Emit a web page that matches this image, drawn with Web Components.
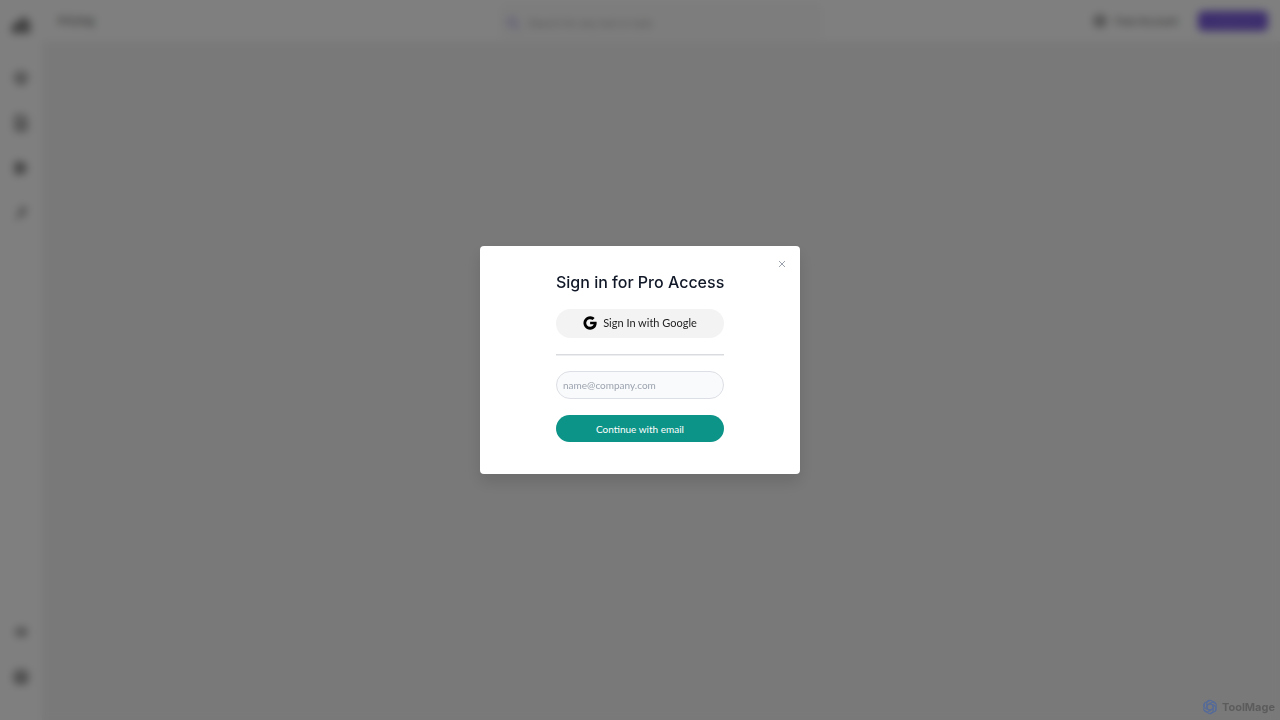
<!DOCTYPE html>
<html lang="en">
<head>
<meta charset="utf-8">
<meta name="viewport" content="width=device-width, initial-scale=1">
<title>Pricing - ToolMage</title>
<style>
  body { margin: 0; font-family: Inter, "Liberation Sans", sans-serif; }
</style>
</head>
<body>
<app-shell>
  <side-bar slot="side"></side-bar>
  <top-bar slot="top" heading="Pricing"></top-bar>
</app-shell>
<modal-overlay>
  <sign-in-card heading="Sign in for Pro Access"></sign-in-card>
</modal-overlay>
<brand-mark>ToolMage</brand-mark>

<script>
  // page frame: narrow menu on the left, bar on top
  class AppShell extends HTMLElement {
    constructor() {
      super();
      this.attachShadow({mode: 'open'}).innerHTML = `<style>
  :host { display: grid; grid-template-columns: 42px 1fr; min-height: 100vh; background: #f3f3f3; }
  .main { min-width: 0; }
</style>
<slot name="side"></slot>
<div class="main">
  <slot name="top"></slot>
  <main><slot></slot></main>
</div>
`;
    }
  }
  customElements.define('app-shell', AppShell);

  class SideBar extends HTMLElement {
    constructor() {
      super();
      this.attachShadow({mode: 'open'}).innerHTML = `<style>
  :host { display: flex; flex-direction: column; align-items: center; justify-content: space-between; box-sizing: border-box; padding: 16px 0 35px; background: #fff; color: #666; }
  nav { display: flex; flex-direction: column; align-items: center; gap: 29px; }
  a { color: inherit; height: 16px; }
  a.home { height: 18px; margin-bottom: 7px; }
  svg { display: block; fill: none; stroke: currentColor; stroke-width: 2; }
  .solid { fill: #999; }
</style>
<nav aria-label="Main">
  <a class="home" href="#" aria-label="Home"><svg width="20" height="18" viewBox="0 0 20 18"><path class="solid" d="M2 16V10l4-3 3 3V5l4-3 5 5v9h-5v-5h-3v5z"/></svg></a>
  <a href="#" aria-label="Tools"><svg width="16" height="16" viewBox="0 0 16 16"><path d="M8 2l6 4-6 4-6-4zM2 10l6 4 6-4"/></svg></a>
  <a href="#" aria-label="Saved"><svg width="16" height="16" viewBox="0 0 16 16"><path d="M3 1h7l3 3v11H3zM5 7h6M5 11h6"/></svg></a>
  <a href="#" aria-label="Categories"><svg width="16" height="16" viewBox="0 0 16 16"><path class="solid" d="M3 3h6l4 5-4 5H3z"/></svg></a>
  <a href="#" aria-label="Trending"><svg width="16" height="16" viewBox="0 0 16 16"><path d="M4 14l3-5h3l2-7M6 4h5v6"/></svg></a>
</nav>
<nav aria-label="Account">
  <a href="#" aria-label="Help"><svg width="16" height="16" viewBox="0 0 16 16"><path d="M3 8h10M8 3l5 5-5 5M4 4v8"/></svg></a>
  <a href="#" aria-label="Profile"><svg width="16" height="16" viewBox="0 0 16 16"><rect x="2" y="2" width="12" height="12" rx="4"/><path d="M5 6h6v5H5z"/></svg></a>
</nav>
`;
    }
  }
  customElements.define('side-bar', SideBar);

  class TopBar extends HTMLElement {
    constructor() {
      super();
      this.attachShadow({mode: 'open'}).innerHTML = `<style>
  :host { display: grid; grid-template-columns: 1fr 320px 1fr; align-items: center; height: 41px; box-sizing: border-box; padding: 0 12px; background: #fff; color: #555; }
  h1 { margin: 0 4px; font-size: 11px; font-weight: 400; }
  label { display: flex; align-items: center; gap: 8px; height: 32px; padding: 4px 4px 0; box-sizing: border-box; border: 1px solid #eee; border-radius: 6px; background: #fbfbfb; }
  label svg { fill: none; stroke: #b3abeb; stroke-width: 2; }
  input { flex: 1; min-width: 0; border: 0; padding: 0; background: none; font: 10px Inter, sans-serif; }
  input::placeholder { color: #aaa; }
  .actions { display: flex; justify-content: flex-end; align-items: center; gap: 20px; }
  a { display: flex; align-items: center; gap: 8px; color: inherit; font-size: 10px; text-decoration: none; }
  a svg { fill: none; stroke: currentColor; stroke-width: 2; }
  button { width: 70px; height: 20px; border: 0; border-radius: 5px; background: #7a5cdc; color: #8a70e0; font: 10px Inter, sans-serif; }
</style>
<h1></h1>
<label aria-label="Search"><svg width="14" height="14" viewBox="0 0 14 14"><circle cx="6" cy="6" r="4"/><path d="M9 9l4 4"/></svg><input type="search" placeholder="Search for any tool or task"></label>
<div class="actions">
  <a href="#"><svg width="14" height="14" viewBox="0 0 14 14"><circle cx="7" cy="7" r="5"/><path d="M4 7h6"/></svg>Free Account</a>
  <button type="button">Sign in</button>
</div>
`;
    }
    connectedCallback() {
      this.shadowRoot.querySelector('h1').textContent = this.getAttribute('heading');
    }
  }
  customElements.define('top-bar', TopBar);

  // dims and blurs the page, centers what is slotted
  class ModalOverlay extends HTMLElement {
    constructor() {
      super();
      this.attachShadow({mode: 'open'}).innerHTML = `<style>
  :host { position: fixed; inset: 0; display: grid; place-items: center; background: rgba(0, 0, 0, .5); backdrop-filter: blur(4px); }
</style>
<slot></slot>
`;
    }
  }
  customElements.define('modal-overlay', ModalOverlay);

  class SignInCard extends HTMLElement {
    constructor() {
      super();
      this.attachShadow({mode: 'open'}).innerHTML = `<style>
  :host { position: relative; display: block; width: 320px; box-sizing: border-box; padding: 25px 0 32px; border-radius: 4px; background: #fff; box-shadow: 0 8px 16px rgba(0, 0, 0, .12); }
  form { display: flex; flex-direction: column; gap: 16px; width: 168px; margin: 0 auto; }
  h2 { margin: 0; font-size: 16px; line-height: 22px; font-weight: 500; color: #111827; text-align: center; white-space: nowrap; }
  button, input { box-sizing: border-box; width: 100%; border: 0; border-radius: 16px; font-family: Lato, sans-serif; font-weight: 400; }
  .google { display: flex; align-items: center; justify-content: center; gap: 6px; height: 29px; padding: 0 0 2px; background: #f3f3f3; color: #222; font-size: 11px; white-space: nowrap; }
  hr { width: 100%; height: 1px; margin: 0; border: 0; background: #d9dbdf; box-shadow: 0 1px #eceef0; }
  input { height: 28px; padding: 0 6px; border: 1px solid #dcdfe5; background: #f9fafb; font-size: 10px; }
  input::placeholder { color: #9ca3af; }
  .email { height: 27px; background: #0d9488; color: #fff; font-size: 10px; }
  .close { position: absolute; top: 12px; right: 12px; display: grid; place-items: center; width: 12px; height: 12px; padding: 0; background: none; }
</style>
<button class="close" type="button" aria-label="Close"><svg width="8" height="8" viewBox="0 0 8 8" fill="none" stroke="#9ca3af"><path d="M1 1l6 6M7 1L1 7"/></svg></button>
<form>
  <h2></h2>
  <button class="google" type="button"><svg width="14" height="14" viewBox="0 0 24 24" fill="#000"><path d="M12.2 9.8v4.5h6.1c-.8 2.6-3 4.3-6.1 4.3a6.6 6.6 0 1 1 4.3-11.6l3.4-3.4A11.4 11.4 0 1 0 12.2 23.4c9.4 0 12-8.5 11-13.6z"/></svg>Sign In with Google</button>
  <hr>
  <input type="email" aria-label="Email" placeholder="name@company.com">
  <button class="email" type="submit">Continue with email</button>
</form>
`;
    }
    connectedCallback() {
      this.shadowRoot.querySelector('h2').textContent = this.getAttribute('heading');
    }
  }
  customElements.define('sign-in-card', SignInCard);

  // corner badge, stays above the overlay
  class BrandMark extends HTMLElement {
    constructor() {
      super();
      this.attachShadow({mode: 'open'}).innerHTML = `<style>
  :host { position: fixed; right: 5px; bottom: 5px; display: flex; align-items: center; gap: 4px; color: #5c5c5c; font-size: 11px; line-height: 16px; font-weight: 700; }
  svg { fill: none; stroke: #566b98; stroke-width: 1.5; }
</style>
<svg width="16" height="16" viewBox="-10 -10 20 20">
  <defs><path id="petal" d="M-4 -2V-5a4 4 0 0 1 7-2L7-4M-4-2L0-4.5 4-2"/></defs>
  <use href="#petal"/><use href="#petal" transform="rotate(60)"/><use href="#petal" transform="rotate(120)"/>
  <use href="#petal" transform="rotate(180)"/><use href="#petal" transform="rotate(240)"/><use href="#petal" transform="rotate(300)"/>
</svg>
<slot></slot>
`;
    }
  }
  customElements.define('brand-mark', BrandMark);
</script>
</body>
</html>
